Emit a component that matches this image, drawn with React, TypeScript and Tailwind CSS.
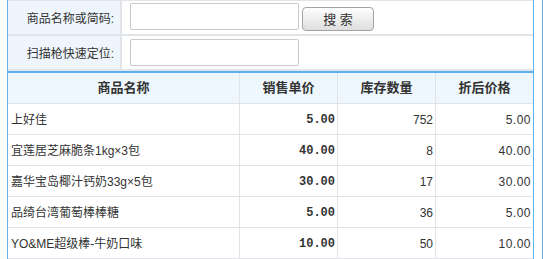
import React from "react";

type Product = {
  name: string;
  price: string;
  stock: number;
  discount: string;
};

const products: Product[] = [
  { name: "上好佳", price: "5.00", stock: 752, discount: "5.00" },
  { name: "宜莲居芝麻脆条1kg×3包", price: "40.00", stock: 8, discount: "40.00" },
  { name: "嘉华宝岛椰汁钙奶33g×5包", price: "30.00", stock: 17, discount: "30.00" },
  { name: "品绮台湾葡萄棒棒糖", price: "5.00", stock: 36, discount: "5.00" },
  { name: "YO&ME超级棒-牛奶口味", price: "10.00", stock: 50, discount: "10.00" },
];

const cjk = "font-['Liberation_Sans','Noto_Sans_CJK_SC',sans-serif]";

const FormRow = ({ label, children }: { label: string; children: React.ReactNode }) => (
  <div className="flex h-[35px] border-b-2 border-[#e1e5e9]">
    <div className="w-[112px] bg-[#eef5fc] flex items-center justify-end pr-[6px] pt-[2px] text-[12px] text-[#333]">
      {label}
    </div>
    <div className="w-[2px] bg-[#e1e5e9]" />
    <div className="flex-1 flex items-start pl-[8px]">{children}</div>
  </div>
);

const TextBox = () => (
  <input
    type="text"
    className="w-[169px] h-[27px] border border-[#cacaca] rounded-[2px] bg-white outline-none"
  />
);

export default function App() {
  return (
    <div className={`w-[543px] h-[259px] bg-white overflow-hidden flex ${cjk}`}>
      <div className="ml-[7px] w-[527px] border-x border-[#62b2ef] flex flex-col">
        {/* search form */}
        <div className="border-t border-[#e1e5e9]">
          <FormRow label="商品名称或简码:">
            <div className="flex items-start pt-[2px]">
              <TextBox />
              <button className="ml-[3px] mt-[4px] w-[72px] h-[24px] rounded-[4px] border border-[#a3a3a3] bg-gradient-to-b from-[#fefefe] to-[#dedede] text-[13px] text-[#333] leading-none">
                搜 索
              </button>
            </div>
          </FormRow>
          <FormRow label="扫描枪快速定位:">
            <div className="pt-[3px]">
              <TextBox />
            </div>
          </FormRow>
        </div>

        {/* product list */}
        <div className="border-t-2 border-[#5cb0ee]">
          <div className="grid grid-cols-[232px_98px_98px_97px] h-[31px] bg-[#eef6fe] border-b border-[#e1e3e6] text-[13px] font-bold text-[#333]">
            <div className="border-r border-[#e1e3e6] flex items-center justify-center">商品名称</div>
            <div className="border-r border-[#e1e3e6] flex items-center justify-center">销售单价</div>
            <div className="border-r border-[#e1e3e6] flex items-center justify-center">库存数量</div>
            <div className="flex items-center justify-center">折后价格</div>
          </div>
          {products.map((p) => (
            <div
              key={p.name}
              className="grid grid-cols-[232px_98px_98px_97px] h-[31px] border-b border-[#e1e3e6] text-[12px] text-[#333]"
            >
              <div className="border-r border-[#e1e3e6] flex items-center pl-[3px] pt-[1px]">{p.name}</div>
              <div className="border-r border-[#e1e3e6] flex items-center justify-end pr-[2px] pt-[1px] font-['Liberation_Mono',monospace] font-bold">
                {p.price}
              </div>
              <div className="border-r border-[#e1e3e6] flex items-center justify-end pr-[2px] pt-[1px]">{p.stock}</div>
              <div className="flex items-center justify-end pr-[2px] pt-[1px] tracking-[0.5px]">{p.discount}</div>
            </div>
          ))}
        </div>
      </div>
      <div className="ml-[8px] w-px bg-[#62b2ef]" />
    </div>
  );
}
